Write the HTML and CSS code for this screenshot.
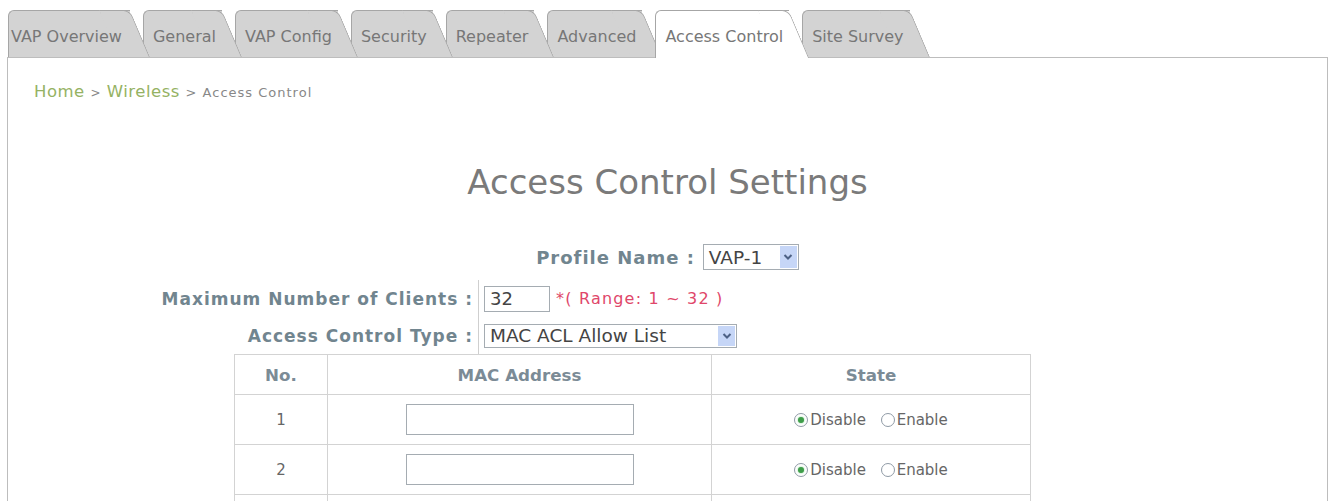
FILE: index.html
```html
<!DOCTYPE html>
<html lang="en">
<head>
  <meta charset="UTF-8" />
  <title>Access Control Settings</title>
  <link rel="stylesheet" href="styles.css">
</head>
<body>
  <div class="tabs">
    <a class="tab first" href="#">VAP Overview</a>
    <a class="tab" href="#">General</a>
    <a class="tab" href="#">VAP Config</a>
    <a class="tab" href="#">Security</a>
    <a class="tab" href="#">Repeater</a>
    <a class="tab" href="#">Advanced</a>
    <a class="tab active" href="#">Access Control</a>
    <a class="tab" href="#">Site Survey</a>
  </div>

  <div class="panel">
    <div class="crumbs">
      <a href="#">Home</a> <span class="sep">&gt;</span> <a href="#">Wireless</a>
      <span class="here">&gt; Access Control</span>
    </div>

    <h1 class="title">Access Control Settings</h1>

    <div class="profile">
      <span class="label">Profile Name :</span>
      <div class="select short">
        <span>VAP-1</span>
        <span class="arrow"><svg width="10" height="8" viewBox="0 0 10 8"><path d="M1.5 2 L5 5.5 L8.5 2" fill="none" stroke="#4d6185" stroke-width="2"/></svg></span>
      </div>
    </div>

    <div class="form">
      <div class="label">Maximum Number of Clients :</div>
      <div class="value">
        <input class="clients" type="text" value="32">
        <span class="hint">*( Range: 1 ~ 32 )</span>
      </div>
      <div class="label">Access Control Type :</div>
      <div class="value">
        <div class="select wide">
          <span>MAC ACL Allow List</span>
          <span class="arrow"><svg width="10" height="8" viewBox="0 0 10 8"><path d="M1.5 2 L5 5.5 L8.5 2" fill="none" stroke="#4d6185" stroke-width="2"/></svg></span>
        </div>
      </div>
    </div>

    <table class="acl">
      <thead>
        <tr>
          <th class="no">No.</th>
          <th class="mac">MAC Address</th>
          <th>State</th>
        </tr>
      </thead>
      <tbody>
        <tr>
          <td>1</td>
          <td><input class="mac-input" type="text"></td>
          <td>
            <span class="radio on"></span>Disable
            <span class="radio gap"></span>Enable
          </td>
        </tr>
        <tr>
          <td>2</td>
          <td><input class="mac-input" type="text"></td>
          <td>
            <span class="radio on"></span>Disable
            <span class="radio gap"></span>Enable
          </td>
        </tr>
        <tr>
          <td></td>
          <td></td>
          <td></td>
        </tr>
      </tbody>
    </table>
  </div>
</body>
</html>
```

FILE: styles.css
```css
* {
  margin: 0;
  padding: 0;
  box-sizing: border-box;
}

body {
  background: #fff;
  color: #666;
  font-family: "DejaVu Sans", Verdana, sans-serif;
  overflow: hidden;
  height: 501px;
}

a {
  text-decoration: none;
}

/* tab strip */
.tabs {
  display: flex;
  margin-top: 10px;
  padding-left: 8px;
  height: 48px;
  position: relative;
  z-index: 2;
  margin-bottom: -1px;
}

.tab {
  position: relative;
  display: block;
  height: 48px;
  padding: 17px 19px 0 10px;
  font-size: 16px;
  line-height: 20px;
  color: #777;
  white-space: nowrap;
}

.tab.first {
  padding-left: 3px;
  padding-right: 21px;
}

.tab::before,
.tab::after {
  content: '';
  position: absolute;
  top: 0;
  bottom: 1px;
  background: #d3d3d3;
  border-top: 1px solid #a6a6a6;
  z-index: -1;
}

.tab::before {
  left: 0;
  right: 13px;
  border-left: 1px solid #a6a6a6;
  border-top-left-radius: 6px;
}

.tab::after {
  right: 3px;
  width: 30px;
  border-right: 1px solid #a6a6a6;
  border-top-right-radius: 7px;
  transform: skewX(23deg);
}

.tab.active::before,
.tab.active::after {
  background: #fff;
  bottom: 0;
}

.tab:nth-child(1) { z-index: 8; }
.tab:nth-child(2) { z-index: 7; }
.tab:nth-child(3) { z-index: 6; }
.tab:nth-child(4) { z-index: 5; }
.tab:nth-child(5) { z-index: 4; }
.tab:nth-child(6) { z-index: 3; }
.tab:nth-child(7) { z-index: 9; }
.tab:nth-child(8) { z-index: 1; }

/* content panel */
.panel {
  margin-left: 7px;
  width: 1321px;
  height: 444px;
  overflow: hidden;
  border: 1px solid #bdbdbd;
  border-bottom: none;
}

.crumbs {
  padding: 24px 0 0 26px;
  font-size: 16.5px;
  letter-spacing: 0.5px;
  line-height: 20px;
  color: #999;
}

.crumbs a {
  color: #95b263;
}

.crumbs .sep {
  font-size: 12px;
  color: #888;
}

.crumbs .here {
  font-size: 13px;
  letter-spacing: 1px;
  color: #888;
}

.title {
  margin-top: 59px;
  text-align: center;
  font-size: 34px;
  line-height: 40px;
  font-weight: normal;
  color: #7a7a7a;
}

.label {
  font-weight: bold;
  font-size: 17px;
  letter-spacing: 1px;
  color: #71858f;
}

.profile {
  margin-top: 42px;
  display: flex;
  justify-content: center;
  align-items: center;
  gap: 8px;
}

.profile .label {
  font-size: 18px;
}

.select {
  display: flex;
  align-items: center;
  justify-content: space-between;
  border: 1px solid #a5acb2;
  background: #fff;
  color: #444;
  font-size: 18.5px;
  padding: 1px 1px 1px 5px;
}

.select.short {
  width: 96px;
  height: 26px;
}

.select.wide {
  width: 253px;
  height: 24px;
}

.select .arrow {
  width: 17px;
  height: 100%;
  background: #c6d6f7;
  display: flex;
  align-items: center;
  justify-content: center;
}

.form {
  margin: 10px 0 0 150px;
  display: grid;
  grid-template-columns: 320px 1fr;
  grid-auto-rows: 37px;
}

.form .label {
  text-align: right;
  padding-right: 5px;
  align-self: center;
}

.form .value {
  border-left: 1px solid #cfcfcf;
  padding-left: 5px;
  display: flex;
  align-items: center;
  gap: 6px;
}

.clients {
  width: 66px;
  height: 26px;
  border: 1px solid #a5acb2;
  padding-left: 5px;
  font: 18px "DejaVu Sans", Verdana, sans-serif;
  color: #444;
}

.hint {
  color: #e0476a;
  font-size: 16px;
  letter-spacing: 1.2px;
}

/* access list table */
.acl {
  margin-left: 226px;
  width: 797px;
  border-collapse: collapse;
  font-size: 15px;
}

.acl th,
.acl td {
  border: 1px solid #d3d3d3;
  text-align: center;
}

.acl th {
  height: 40px;
  font-size: 16.7px;
  color: #7b8b96;
}

.acl td {
  height: 50px;
  color: #666;
}

.acl .no {
  width: 93px;
}

.acl .mac {
  width: 384px;
}

.mac-input {
  width: 228px;
  height: 31px;
  border: 1px solid #a5acb2;
  vertical-align: middle;
}

.radio {
  display: inline-block;
  width: 14px;
  height: 14px;
  border: 1px solid #8f9aa5;
  border-radius: 50%;
  vertical-align: -2px;
  margin-right: 2px;
  position: relative;
}

.radio.gap {
  margin-left: 10px;
}

.radio.on::after {
  content: '';
  position: absolute;
  left: 3px;
  top: 3px;
  width: 6px;
  height: 6px;
  border-radius: 50%;
  background: #3f9d4a;
  box-shadow: 0 0 2px #7fd08a;
}
```
